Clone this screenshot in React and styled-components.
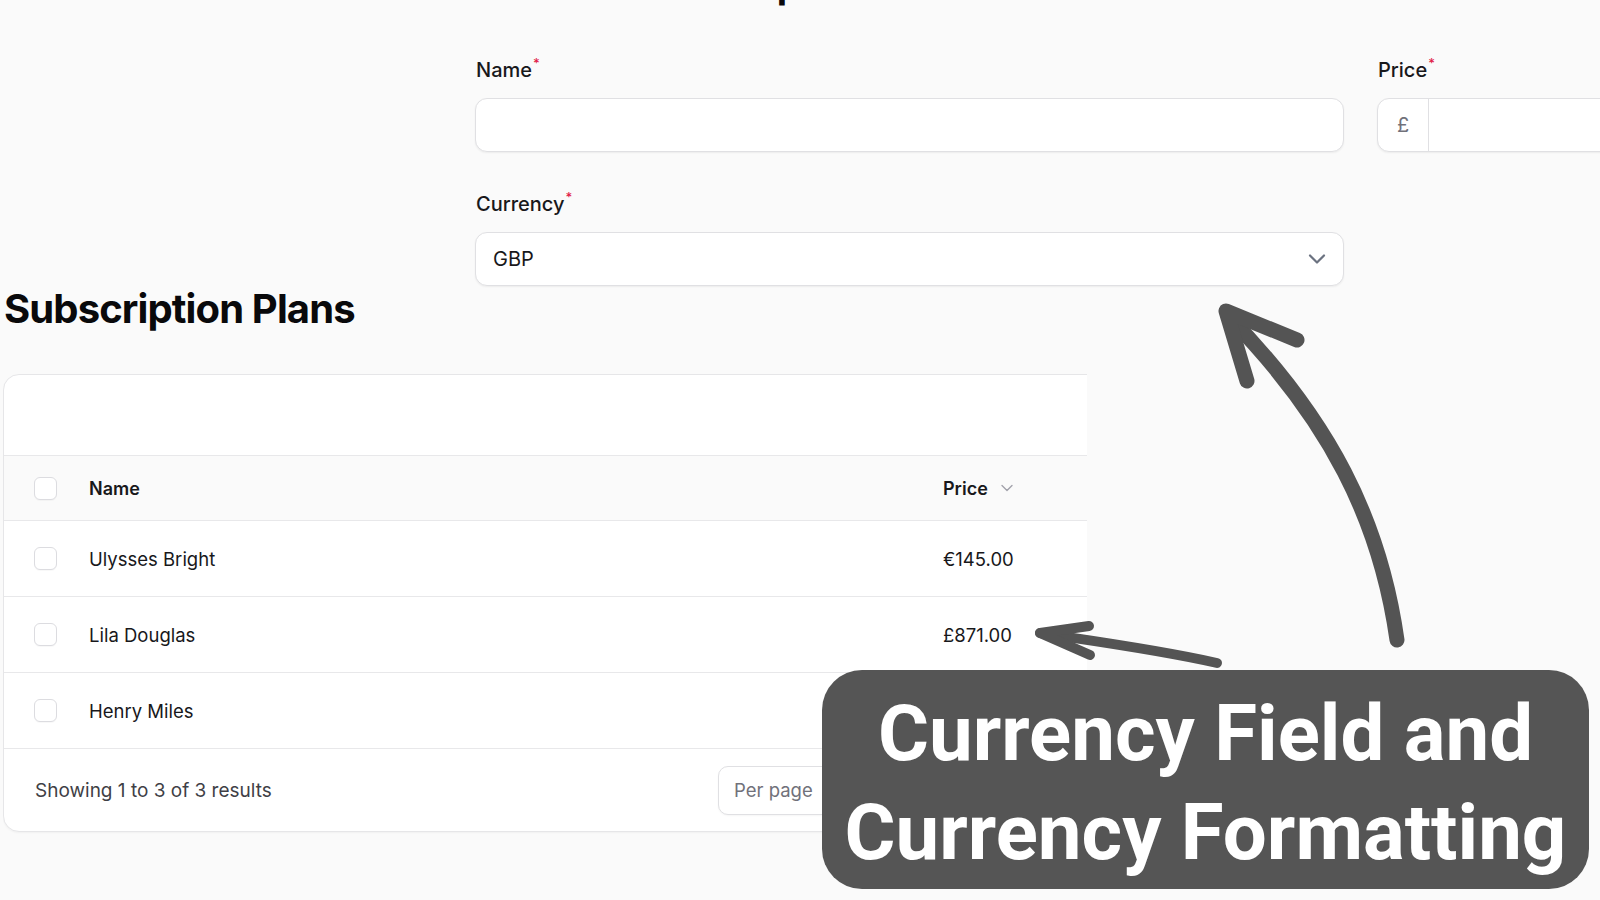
import React from "react";
import styled, { createGlobalStyle } from "styled-components";
import { ChevronDown } from "lucide-react";

const GlobalStyle = createGlobalStyle`
  html, body { margin: 0; padding: 0; background: #fafafa; }
  body { font-family: Inter, "Noto Sans", sans-serif; color: #18181b; }
  * { box-sizing: border-box; }
`;

const Page = styled.div`
  position: relative;
  width: 1600px;
  height: 900px;
  overflow: hidden;
  background: #fafafa;
`;

const FormArea = styled.section`
  margin-left: 475px;
  width: 1800px;
`;

const PageTitle = styled.h1`
  margin: -38px 0 0 ${(p) => p.$indent}px;
  font-size: 38px;
  line-height: 44px;
  font-weight: 700;
  letter-spacing: -0.025em;
  color: #09090b;
  white-space: nowrap;
`;

const FieldGrid = styled.div`
  display: grid;
  grid-template-columns: 869px 869px;
  column-gap: 33px;
  row-gap: 38px;
  margin-top: 50px;
`;

const Field = styled.div`
  display: flex;
  flex-direction: column;
  gap: 14px;
`;

const Label = styled.label`
  font-size: 20px;
  line-height: 28px;
  font-weight: 500;
  color: #18181b;
  padding-left: 1px;
`;

const Required = styled.sup`
  color: #e11d48;
  font-size: 13px;
  font-weight: 500;
  margin-left: 1px;
  vertical-align: 9px;
  line-height: 0;
`;

const InputShell = styled.div`
  height: 54px;
  display: flex;
  align-items: center;
  background: #ffffff;
  border: 1px solid #e0e0e3;
  border-radius: 12px;
  box-shadow: 0 1px 2px rgba(0, 0, 0, 0.06);
  overflow: hidden;
`;

const TextInput = styled.input`
  flex: 1;
  height: 100%;
  border: 0;
  outline: none;
  background: transparent;
  font-family: inherit;
  font-size: 20px;
  padding: 0 17px;
`;

const Prefix = styled.span`
  width: 51px;
  height: 100%;
  display: flex;
  align-items: center;
  justify-content: center;
  border-right: 1px solid #e0e0e3;
  color: #71717a;
  font-size: 20px;
`;

const SelectShell = styled(InputShell)`
  justify-content: space-between;
  padding: 0 12px 0 17px;
  font-size: 20px;
  color: #18181b;
  svg { color: #6b7280; }
`;

const TableArea = styled.section`
  margin: -1px 0 0 3px;
`;

const SectionTitle = styled.h2`
  margin: 0 0 0 1px;
  font-size: 40px;
  line-height: 48px;
  font-weight: 700;
  letter-spacing: -0.022em;
  color: #09090b;
`;

const CardClip = styled.div`
  margin-top: 41px;
  width: 1084px;
  overflow: hidden;
  padding-bottom: 4px;
`;

const Card = styled.div`
  width: 1200px;
  background: #ffffff;
  border: 1px solid #e6e6e8;
  border-radius: 16px;
  box-shadow: 0 1px 2px rgba(0, 0, 0, 0.04);
  overflow: hidden;
`;

const Toolbar = styled.div`
  height: 81px;
  border-bottom: 1px solid #e8e8ea;
`;

const Row = styled.div`
  display: grid;
  grid-template-columns: 85px 854px 1fr;
  align-items: center;
  height: ${(p) => (p.$head ? 65 : 76)}px;
  background: ${(p) => (p.$head ? "#fafafa" : "#ffffff")};
  border-bottom: 1px solid #e8e8ea;
  font-size: ${(p) => (p.$head ? 18 : 18.5)}px;
  font-weight: ${(p) => (p.$head ? 600 : 400)};
  color: #18181b;
`;

const CheckCell = styled.div`
  padding-left: 30px;
  display: flex;
  align-items: center;
`;

const Checkbox = styled.span`
  width: 23px;
  height: 23px;
  border: 1px solid #dcdce0;
  border-radius: 6px;
  background: #ffffff;
  box-shadow: 0 1px 1px rgba(0, 0, 0, 0.03);
`;

const Cell = styled.div`
  display: flex;
  align-items: center;
  gap: 9px;
  svg { color: #a1a1aa; }
`;

const Footer = styled.div`
  height: 82px;
  display: grid;
  grid-template-columns: 683px auto;
  align-items: center;
  padding-left: 31px;
  font-size: 19px;
  color: #3f3f46;
`;

const PerPage = styled.div`
  height: 49px;
  display: flex;
  align-items: center;
  border: 1px solid #e0e0e3;
  border-radius: 10px;
  background: #ffffff;
  color: #71717a;
  font-size: 18.5px;
  box-shadow: 0 1px 2px rgba(0, 0, 0, 0.04);
  justify-self: start;
`;

const PerPageLabel = styled.span`
  padding: 0 15px;
  height: 100%;
  display: flex;
  align-items: center;
  border-right: 1px solid #e0e0e3;
`;

const PerPageValue = styled.span`
  width: 90px;
  padding: 0 12px 0 15px;
  display: flex;
  align-items: center;
  justify-content: flex-end;
  color: #18181b;
`;

const Overlay = styled.svg`
  position: absolute;
  left: 0;
  top: 0;
  width: 1600px;
  height: 900px;
  pointer-events: none;
`;

const Caption = styled.div`
  position: absolute;
  left: 822px;
  top: 670px;
  width: 767px;
  height: 219px;
  background: #555555;
  border-radius: 40px;
  padding-top: 14px;
  color: #ffffff;
  font-family: Roboto, "Liberation Sans", sans-serif;
  font-weight: 700;
  font-size: 78px;
  line-height: 99px;
  text-align: center;
  white-space: nowrap;
`;

const CaptionLine = styled.span`
  display: block;
`;

const plans = [
  { name: "Ulysses Bright", price: "€145.00" },
  { name: "Lila Douglas", price: "£871.00" },
  { name: "Henry Miles", price: "" },
];

export default function App() {
  return (
    <Page>
      <GlobalStyle />
      <FormArea>
        <PageTitle $indent={40}>Create Subscription Plan</PageTitle>
        <FieldGrid>
          <Field>
            <Label>
              Name<Required>*</Required>
            </Label>
            <InputShell>
              <TextInput type="text" />
            </InputShell>
          </Field>
          <Field>
            <Label>
              Price<Required>*</Required>
            </Label>
            <InputShell>
              <Prefix>£</Prefix>
              <TextInput type="text" />
            </InputShell>
          </Field>
          <Field>
            <Label>
              Currency<Required>*</Required>
            </Label>
            <SelectShell>
              <span>GBP</span>
              <ChevronDown size={28} strokeWidth={1.9} />
            </SelectShell>
          </Field>
        </FieldGrid>
      </FormArea>

      <TableArea>
        <SectionTitle>Subscription Plans</SectionTitle>
        <CardClip>
          <Card>
            <Toolbar />
            <Row $head>
              <CheckCell>
                <Checkbox />
              </CheckCell>
              <Cell>Name</Cell>
              <Cell>
                Price
                <ChevronDown size={20} strokeWidth={1.6} />
              </Cell>
            </Row>
            {plans.map((p) => (
              <Row key={p.name}>
                <CheckCell>
                  <Checkbox />
                </CheckCell>
                <Cell>{p.name}</Cell>
                <Cell>{p.price}</Cell>
              </Row>
            ))}
            <Footer>
              <span>Showing 1 to 3 of 3 results</span>
              <PerPage>
                <PerPageLabel>Per page</PerPageLabel>
                <PerPageValue>
                  <ChevronDown size={18} />
                </PerPageValue>
              </PerPage>
            </Footer>
          </Card>
        </CardClip>
      </TableArea>

      <Overlay viewBox="0 0 1600 900">
        <g fill="none" stroke="#545454" strokeLinecap="round" strokeLinejoin="round">
          <path d="M1397 640 C1380 520 1330 420 1228 316" strokeWidth="15" />
          <path d="M1297 340 L1226 311 L1247 381" strokeWidth="15" />
          <path d="M1217 663 C1160 650 1100 642 1040 633" strokeWidth="10" />
          <path d="M1089 626 L1040 633 L1090 655" strokeWidth="10" />
        </g>
      </Overlay>

      <Caption>
        <CaptionLine>Currency Field and</CaptionLine>
        <CaptionLine>Currency Formatting</CaptionLine>
      </Caption>
    </Page>
  );
}
